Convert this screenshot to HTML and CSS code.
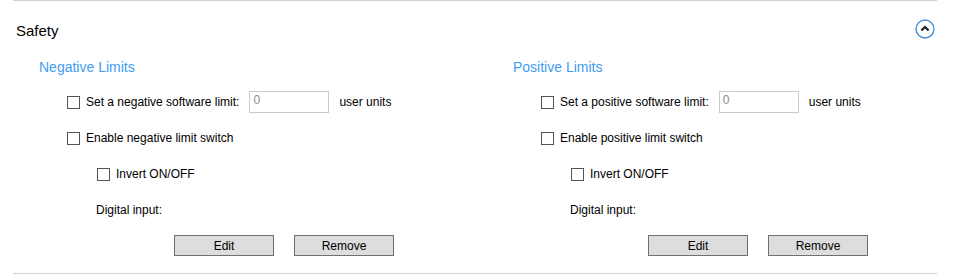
FILE: index.html
```html
<!DOCTYPE html>
<html lang="en">
<head>
    <meta charset="UTF-8">
    <title>Safety</title>
    <link rel="stylesheet" href="styles.css">
</head>
<body>
    <section class="panel">
        <div class="panel-header">
            <h2 class="panel-title">Safety</h2>
            <button type="button" class="collapse-btn" aria-label="Collapse">
                <svg width="20" height="20" viewBox="0 0 20 20">
                    <circle cx="10" cy="10" r="9" fill="none" stroke="#4a8fd6" stroke-width="1.4"/>
                    <path d="M6.4 11.6 L10 8 L13.6 11.6" fill="none" stroke="#1e1e1e" stroke-width="2.1"/>
                </svg>
            </button>
        </div>

        <div class="limits">
            <!-- Negative side -->
            <div class="limit-col">
                <h3 class="limit-title">Negative Limits</h3>

                <div class="row">
                    <label class="check"><span class="box"></span>Set a negative software limit:</label>
                    <input type="text" class="num-input" value="0">
                    <span class="unit">user units</span>
                </div>

                <div class="row">
                    <label class="check"><span class="box"></span>Enable negative limit switch</label>
                </div>

                <div class="row sub">
                    <label class="check"><span class="box"></span>Invert ON/OFF</label>
                </div>

                <div class="row sub-text">Digital input:</div>

                <div class="row actions">
                    <button type="button" class="btn">Edit</button>
                    <button type="button" class="btn">Remove</button>
                </div>
            </div>

            <!-- Positive side -->
            <div class="limit-col">
                <h3 class="limit-title">Positive Limits</h3>

                <div class="row">
                    <label class="check"><span class="box"></span>Set a positive software limit:</label>
                    <input type="text" class="num-input" value="0">
                    <span class="unit">user units</span>
                </div>

                <div class="row">
                    <label class="check"><span class="box"></span>Enable positive limit switch</label>
                </div>

                <div class="row sub">
                    <label class="check"><span class="box"></span>Invert ON/OFF</label>
                </div>

                <div class="row sub-text">Digital input:</div>

                <div class="row actions">
                    <button type="button" class="btn">Edit</button>
                    <button type="button" class="btn">Remove</button>
                </div>
            </div>
        </div>
    </section>
</body>
</html>
```

FILE: styles.css
```css
:root {
    --text-color: #000;
    --line-color: #d2d2d2;
    --accent-blue: #3f9cf1;
    --box-border: #555;
    --input-border: #cbcbcb;
    --button-bg: #dddddd;
    --button-border: #707070;
}

body {
    margin: 0;
    background: #fff;
    color: var(--text-color);
    font-family: 'Liberation Sans', Arial, sans-serif;
    font-size: 12px;
}

/* Panel */
.panel {
    margin-left: 13px;
    width: 924px;
    border-top: 1px solid var(--line-color);
    border-bottom: 1px solid var(--line-color);
    padding-bottom: 17px;
}

.panel-header {
    height: 58px;
    display: flex;
    align-items: center;
    justify-content: space-between;
    padding: 0 2px 0 3px;
}

.panel-title {
    margin: 0;
    font-size: 15px;
    font-weight: normal;
}

.collapse-btn {
    width: 20px;
    height: 20px;
    padding: 0;
    border: none;
    background: none;
    margin-bottom: 3px;
    display: flex;
}

/* Columns */
.limits {
    display: grid;
    grid-template-columns: 474px 1fr;
    padding-left: 26px;
}

.limit-col {
    display: flex;
    flex-direction: column;
    gap: 14px;
}

.limit-title {
    margin: 0 0 2px;
    height: 16px;
    line-height: 16px;
    font-size: 14px;
    font-weight: normal;
    color: var(--accent-blue);
}

.row {
    height: 22px;
    display: flex;
    align-items: center;
    padding-left: 28px;
}

.row.sub {
    padding-left: 58px;
}

.row.sub-text {
    padding-left: 57px;
}

.row.actions {
    height: 21px;
    padding-left: 135px;
    gap: 20px;
}

.check {
    display: flex;
    align-items: center;
}

.box {
    width: 13px;
    height: 13px;
    box-sizing: border-box;
    border: 1px solid var(--box-border);
    background: #fff;
    margin-right: 6px;
}

.num-input {
    width: 80px;
    height: 22px;
    box-sizing: border-box;
    margin: 0 10px;
    padding: 1px 3px 5px;
    border: 1px solid var(--input-border);
    font-family: inherit;
    font-size: 12px;
    color: #8c8c8c;
    outline: none;
}

.btn {
    width: 100px;
    height: 21px;
    padding: 0;
    background: var(--button-bg);
    border: 1px solid var(--button-border);
    border-radius: 0;
    font-family: inherit;
    font-size: 12px;
    color: var(--text-color);
}
```
